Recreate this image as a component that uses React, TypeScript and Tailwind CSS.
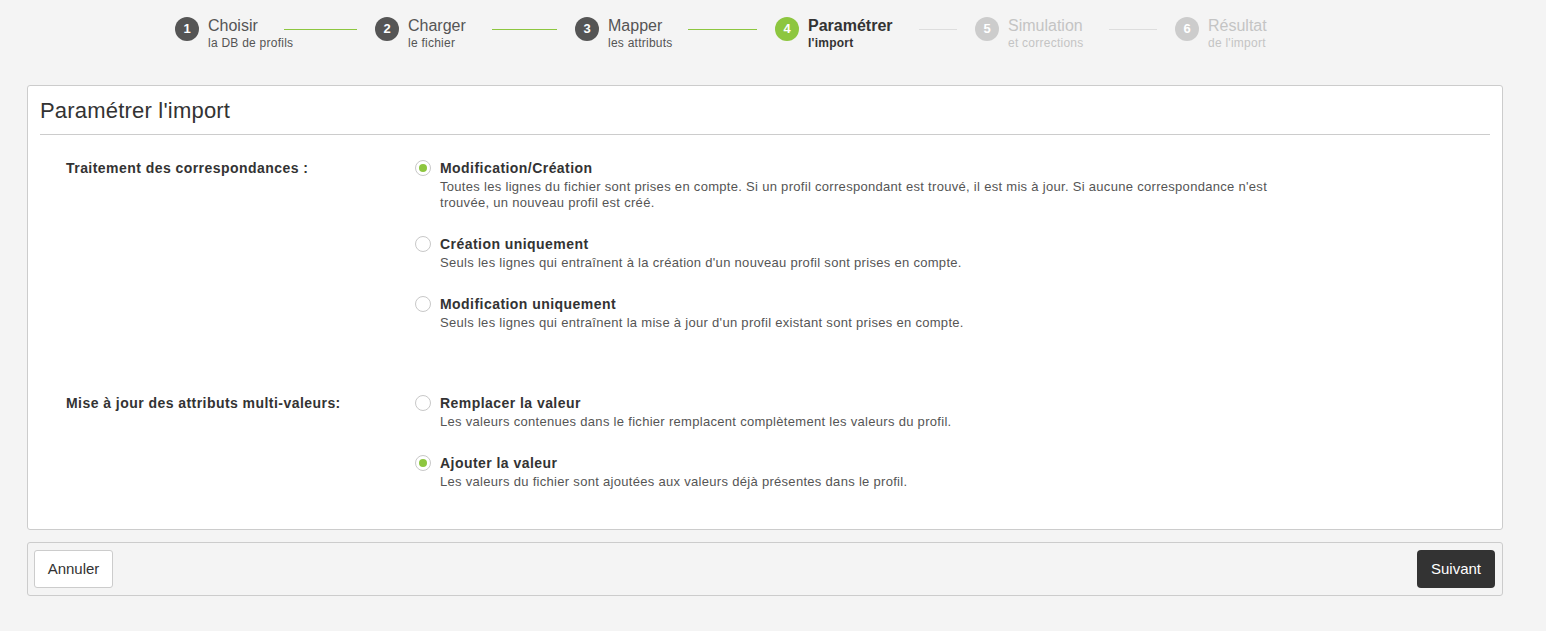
import React from "react";

type Step = { n: number; title: string; sub: string; state: "done" | "current" | "todo"; line?: "green" | "gray" };

const steps: Step[] = [
  { n: 1, title: "Choisir", sub: "la DB de profils", state: "done", line: "green" },
  { n: 2, title: "Charger", sub: "le fichier", state: "done", line: "green" },
  { n: 3, title: "Mapper", sub: "les attributs", state: "done", line: "green" },
  { n: 4, title: "Paramétrer", sub: "l'import", state: "current", line: "gray" },
  { n: 5, title: "Simulation", sub: "et corrections", state: "todo", line: "gray" },
  { n: 6, title: "Résultat", sub: "de l'import", state: "todo" },
];

function StepItem({ s, last }: { s: Step; last: boolean }) {
  const circle =
    s.state === "done" ? "bg-[#555555]" : s.state === "current" ? "bg-[#8dc63f]" : "bg-[#cccccc]";
  const title =
    s.state === "done"
      ? "text-[#555555]"
      : s.state === "current"
      ? "text-[#333333] font-bold"
      : "text-[#c4c4c4]";
  const sub =
    s.state === "done"
      ? "text-[#555555]"
      : s.state === "current"
      ? "text-[#333333] font-bold"
      : "text-[#c4c4c4]";
  return (
    <div className={last ? "flex" : "flex w-[200px]"}>
      <div
        className={`${circle} flex h-6 w-6 shrink-0 items-center justify-center rounded-full text-[13px] font-bold text-white`}
      >
        {s.n}
      </div>
      <div className="ml-[9px] flex flex-1 flex-col pr-[18px]">
        <div className="flex">
          <span className={`${title} text-[16px] leading-[18px]`}>{s.title}</span>
          {s.line && (
            <div
              className={`ml-[26px] mt-[12px] h-px flex-1 ${
                s.line === "green" ? "bg-[#8dc63f]" : "bg-[#dddddd]"
              }`}
            />
          )}
        </div>
        <span className={`${sub} mt-[1px] text-[12px] leading-[14px] tracking-[0.25px]`}>{s.sub}</span>
      </div>
    </div>
  );
}

function Radio({ checked }: { checked?: boolean }) {
  return (
    <div className="mt-[2px] flex h-4 w-4 shrink-0 items-center justify-center rounded-full border border-[#c8c8c8] bg-white">
      {checked && <div className="h-2 w-2 rounded-full bg-[#8dc63f]" />}
    </div>
  );
}

function Option({ checked, title, desc }: { checked?: boolean; title: string; desc: string }) {
  return (
    <div className="flex gap-[9px]">
      <Radio checked={checked} />
      <div className="flex flex-col">
        <span className="text-[14px] font-bold leading-[20px] tracking-[0.45px] text-[#333333]">{title}</span>
        <span className="mt-px max-w-[840px] text-[13px] leading-[16px] tracking-[0.3px] text-[#555555]">
          {desc}
        </span>
      </div>
    </div>
  );
}

function Group({ label, children }: { label: string; children: React.ReactNode }) {
  return (
    <div className="flex">
      <div className="w-[349px] shrink-0 text-[14px] font-bold leading-[20px] tracking-[0.45px] text-[#333333]">
        {label}
      </div>
      <div className="flex flex-col gap-[23px]">{children}</div>
    </div>
  );
}

export default function App() {
  return (
    <div
      className="min-h-[631px] w-full bg-[#f4f4f4]"
      style={{ fontFamily: '"Liberation Sans", Arial, sans-serif' }}
    >
      <div className="mx-auto flex w-[1196px] pt-[17px]">
        {steps.map((s, i) => (
          <StepItem key={s.n} s={s} last={i === steps.length - 1} />
        ))}
      </div>

      <div className="ml-[27px] mt-[35px] w-[1476px] rounded-[3px] border border-[#cccccc] bg-white px-[12px] pb-[39px] pt-[10px]">
        <h1 className="text-[22px] leading-[30px] tracking-[0.2px] text-[#333333]">Paramétrer l'import</h1>
        <div className="mt-[8px] h-px bg-[#cccccc]" />
        <div className="flex flex-col gap-[62px] pl-[26px] pt-[23px]">
          <Group label="Traitement des correspondances :">
            <Option
              checked
              title="Modification/Création"
              desc="Toutes les lignes du fichier sont prises en compte. Si un profil correspondant est trouvé, il est mis à jour. Si aucune correspondance n'est trouvée, un nouveau profil est créé."
            />
            <Option
              title="Création uniquement"
              desc="Seuls les lignes qui entraînent à la création d'un nouveau profil sont prises en compte."
            />
            <Option
              title="Modification uniquement"
              desc="Seuls les lignes qui entraînent la mise à jour d'un profil existant sont prises en compte."
            />
          </Group>
          <Group label="Mise à jour des attributs multi-valeurs:">
            <Option
              title="Remplacer la valeur"
              desc="Les valeurs contenues dans le fichier remplacent complètement les valeurs du profil."
            />
            <Option
              checked
              title="Ajouter la valeur"
              desc="Les valeurs du fichier sont ajoutées aux valeurs déjà présentes dans le profil."
            />
          </Group>
        </div>
      </div>

      <div className="ml-[27px] mt-[12px] flex w-[1476px] items-center justify-between rounded-[3px] border border-[#cccccc] bg-[#f4f4f4] py-[7px] pl-[6px] pr-[7px]">
        <button className="h-[38px] w-[79px] rounded-[3px] border border-[#cccccc] bg-white text-[15px] text-[#333333]">
          Annuler
        </button>
        <button className="h-[38px] w-[78px] rounded-[4px] bg-[#333333] text-[15px] text-white">
          Suivant
        </button>
      </div>
    </div>
  );
}
